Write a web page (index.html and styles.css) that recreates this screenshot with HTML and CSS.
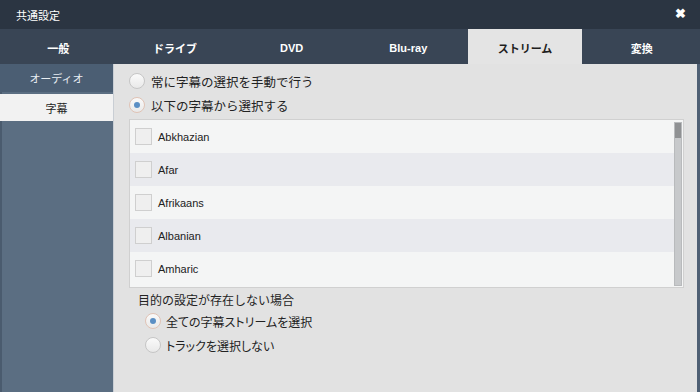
FILE: index.html
```html
<!DOCTYPE html>
<html lang="ja">
<head>
    <meta charset="UTF-8">
    <title>共通設定</title>
    <link rel="stylesheet" href="styles.css">
</head>
<body>
    <div class="window">
        <!-- Title bar -->
        <div class="titlebar">
            <span class="title">共通設定</span>
            <span class="close">&#x2716;</span>
        </div>

        <!-- Tabs -->
        <nav class="tabs">
            <div class="tab">一般</div>
            <div class="tab">ドライブ</div>
            <div class="tab">DVD</div>
            <div class="tab">Blu-ray</div>
            <div class="tab active">ストリーム</div>
            <div class="tab">変換</div>
        </nav>

        <div class="main">
            <!-- Side menu -->
            <aside class="sidebar">
                <div class="side-item">オーディオ</div>
                <div class="side-item selected">字幕</div>
            </aside>

            <!-- Settings -->
            <section class="content">
                <label class="option"><span class="radio"></span>常に字幕の選択を手動で行う</label>
                <label class="option"><span class="radio on"></span>以下の字幕から選択する</label>

                <div class="langlist">
                    <div class="rows">
                        <div class="row"><span class="check"></span>Abkhazian</div>
                        <div class="row"><span class="check"></span>Afar</div>
                        <div class="row"><span class="check"></span>Afrikaans</div>
                        <div class="row"><span class="check"></span>Albanian</div>
                        <div class="row"><span class="check"></span>Amharic</div>
                    </div>
                    <div class="scrollbar"><div class="thumb"></div></div>
                </div>

                <div class="fallback">
                    <p class="fallback-title">目的の設定が存在しない場合</p>
                    <label class="option"><span class="radio on"></span>全ての字幕ストリームを選択</label>
                    <label class="option"><span class="radio"></span>トラックを選択しない</label>
                </div>
            </section>
        </div>
    </div>
</body>
</html>
```

FILE: styles.css
```css
/* Reset */
* {
    margin: 0;
    padding: 0;
    box-sizing: border-box;
}

body {
    font-family: "Liberation Sans", "Noto Sans CJK JP", sans-serif;
    font-size: 12px;
    color: #222;
    background: #e2e2e2;
}

.window {
    width: 700px;
    height: 392px;
    display: flex;
    flex-direction: column;
    overflow: hidden;
}

/* Title bar */
.titlebar {
    height: 29px;
    background: #2b3542;
    color: #fff;
    display: flex;
    align-items: center;
    justify-content: space-between;
    padding: 0 14px 0 16px;
}

.title {
    font-size: 11px;
    padding-top: 1px;
}

.close {
    font-size: 13px;
    font-weight: bold;
    padding-bottom: 2px;
}

/* Tabs */
.tabs {
    height: 35px;
    background: #394555;
    display: grid;
    grid-template-columns: repeat(6, 1fr);
}

.tab {
    display: flex;
    align-items: center;
    justify-content: center;
    color: #fff;
    font-weight: bold;
    font-size: 11px;
    padding-top: 2px;
}

.tab.active {
    background: #e4e4e4;
    color: #1e1e1e;
    margin-left: 1px;
    margin-right: 1px;
}

/* Body */
.main {
    flex: 1;
    display: flex;
    border-right: 3px solid #4f6074;
}

.sidebar {
    width: 114px;
    background: #5b6e82;
    border-left: 2px solid #4a5b6e;
    border-right: 1px solid #c9ced4;
    font-size: 11px;
}

.side-item {
    height: 28px;
    display: flex;
    align-items: center;
    justify-content: center;
    color: #e8edf2;
    background: #4b5e73;
    margin-bottom: 2px;
    margin-left: -2px;
}

.side-item.selected {
    background: #f2f2f2;
    color: #222;
    height: 27px;
}

/* Content */
.content {
    flex: 1;
    background: #e2e2e2;
    padding: 5px 13px 0 15px;
}

.option {
    display: flex;
    align-items: center;
    height: 24px;
    gap: 6px;
    font-size: 12.5px;
}

.radio {
    width: 16px;
    height: 16px;
    border-radius: 50%;
    border: 1px solid #c6c6c6;
    background: linear-gradient(#fafafa, #e9e9e9);
    display: flex;
    align-items: center;
    justify-content: center;
}

.radio.on::after {
    content: "";
    width: 6px;
    height: 6px;
    border-radius: 50%;
    background: #5b8fc4;
}

.radio.on {
    border-color: #e0c3b5;
}

/* Language list */
.langlist {
    margin-top: 2px;
    height: 169px;
    border: 1px solid #d0d0d0;
    background: #f4f5f5;
    display: flex;
    font-size: 11px;
}

.rows {
    flex: 1;
}

.row {
    height: 33px;
    display: flex;
    align-items: center;
    padding-left: 5px;
    gap: 6px;
}

.row:nth-child(even) {
    background: #e9eaee;
}

.check {
    width: 17px;
    height: 17px;
    border: 1px solid #cfcfcf;
    background: #efefef;
}

.scrollbar {
    width: 8px;
    margin: 2px 1px 1px 0;
    background: #c7c9cb;
    border: 1px solid #b8babc;
}

.thumb {
    height: 15px;
    background: #8f9193;
}

/* Fallback options */
.fallback {
    padding-top: 5px;
}

.fallback-title {
    padding-left: 9px;
    line-height: 16px;
}

.fallback .option {
    padding-left: 16px;
    gap: 5px;
    font-size: 12px;
    font-feature-settings: "palt";
}
```
